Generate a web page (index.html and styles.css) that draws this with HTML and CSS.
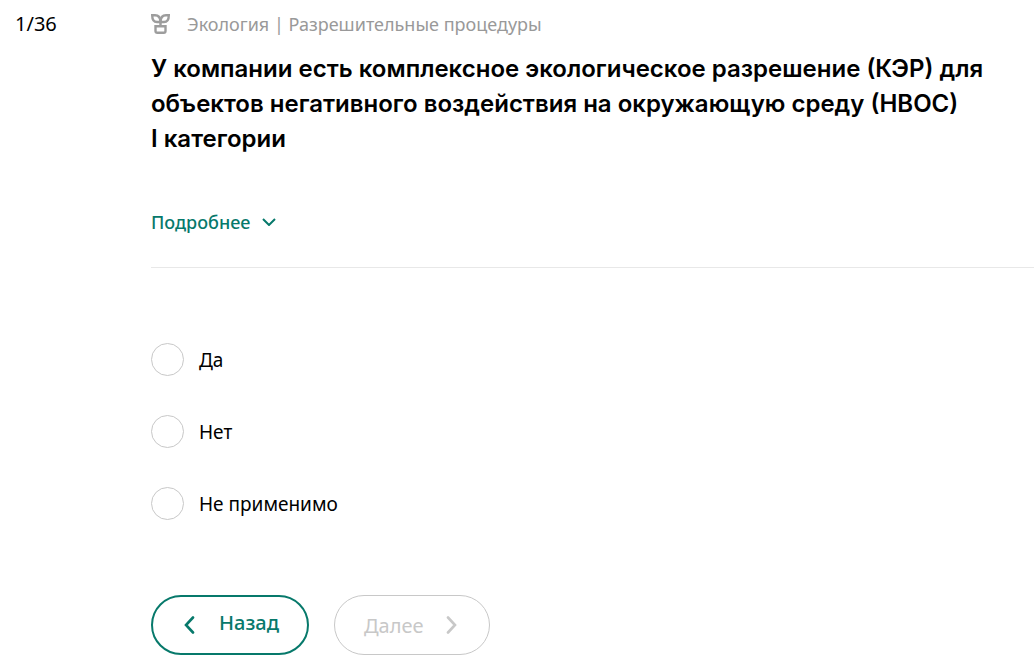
FILE: index.html
```
<!DOCTYPE html>
<html lang="ru">
<head>
  <meta charset="UTF-8" />
  <meta name="viewport" content="width=device-width, initial-scale=1.0"/>
  <title>Анкета</title>
  <link rel="stylesheet" href="styles.css">
</head>
<body>

  <main class="quiz">
    <div class="counter">1/36</div>

    <form class="question">
      <div class="topic">
        <svg class="topic-icon" width="20" height="20" viewBox="0 0 20 20" fill="none" stroke="#9d9d9d" stroke-width="2.400">
          <path d="M1.200 1.200H4C7.500 1.200 9.500 3 9.500 8H6C3 8 1.200 5.500 1.200 1.200Z"/>
          <path d="M17.800 1.200H15C11.500 1.200 9.500 3 9.500 8H13C16 8 17.800 5.500 17.800 1.200Z"/>
          <path d="M9.500 7V12"/>
          <path d="M4.500 12.200H14.500V17Q14.500 18.800 12.700 18.800H6.300Q4.500 18.800 4.500 17Z"/>
        </svg>
        <span>Экология | Разрешительные процедуры</span>
      </div>

      <h1 class="title">У компании есть комплексное экологическое разрешение (КЭР) для<br>объектов негативного воздействия на окружающую среду (НВОС)<br>I категории</h1>

      <button class="details" type="button">
        Подробнее
        <svg width="14" height="8" viewBox="0 0 14 8" fill="none" stroke="currentColor" stroke-width="2">
          <path d="M1 1L7 7L13 1"/>
        </svg>
      </button>

      <div class="answers">
        <label class="answer"><input type="radio" name="answer" value="yes"> Да</label>
        <label class="answer"><input type="radio" name="answer" value="no"> Нет</label>
        <label class="answer"><input type="radio" name="answer" value="na"> Не применимо</label>
      </div>

      <div class="buttons">
        <button class="btn btn-back" type="button">
          <svg width="12" height="18" viewBox="0 0 12 18" fill="none" stroke="currentColor" stroke-width="2.600" stroke-linecap="round">
            <path d="M9 1.500L2 9L9 16.500"/>
          </svg>
          <span>Назад</span>
        </button>
        <button class="btn btn-next" type="submit" disabled>
          <span>Далее</span>
          <svg width="12" height="18" viewBox="0 0 12 18" fill="none" stroke="currentColor" stroke-width="2.600" stroke-linecap="round">
            <path d="M2 1.500L9 9L2 16.500"/>
          </svg>
        </button>
      </div>
    </form>
  </main>

</body>
</html>
```

FILE: styles.css
```
body {
  font-family: "Noto Sans", sans-serif;
  margin: 0;
  background: #fff;
  color: #000;
}
.quiz {
  display: flex;
  padding: 10px 0 12px 15px;
}
.counter {
  flex: 0 0 136px;
  font-size: 20px;
  line-height: 28px;
}
.question {
  flex: 1;
  min-width: 0;
}
.topic {
  display: flex;
  align-items: center;
  gap: 16px;
  font-size: 18px;
  line-height: 28px;
  color: #999;
}
.title {
  margin: 13px 0 0;
  font-family: Inter, "Noto Sans", sans-serif;
  font-size: 24px;
  font-weight: 600;
  line-height: 35px;
}
.details {
  display: flex;
  align-items: center;
  gap: 12px;
  margin-top: 52px;
  padding: 0;
  border: 0;
  background: none;
  font-family: inherit;
  font-size: 18px;
  font-weight: 500;
  line-height: 28px;
  color: #07796b;
  cursor: pointer;
}
.answers {
  display: flex;
  flex-direction: column;
  gap: 39px;
  margin-top: 31px;
  padding-top: 75px;
  border-top: 1px solid #e8e8e8;
}
.answer {
  display: flex;
  align-items: center;
  align-self: flex-start;
  gap: 15px;
  font-size: 19px;
  line-height: 32px;
  cursor: pointer;
}
.answer input {
  appearance: none;
  width: 33px;
  height: 33px;
  margin: 0;
  border: 1px solid #c8c8c8;
  border-radius: 50%;
}
.answer input:checked {
  border: 10px solid #07796b;
}
.buttons {
  display: flex;
  gap: 25px;
  margin-top: 75px;
}
.btn {
  display: flex;
  align-items: center;
  gap: 23px;
  height: 60px;
  border-radius: 30px;
  background: none;
  font-family: inherit;
  font-size: 20px;
}
.btn-back {
  padding: 0 28px 0 31px;
  border: 2px solid #07796b;
  color: #07796b;
  font-weight: 500;
  cursor: pointer;
}
.btn-back span {
  padding-bottom: 6px;
}
.btn-next {
  padding: 0 31px 0 29px;
  border: 1px solid #c8c8c8;
  color: #c8c8c8;
}
```
